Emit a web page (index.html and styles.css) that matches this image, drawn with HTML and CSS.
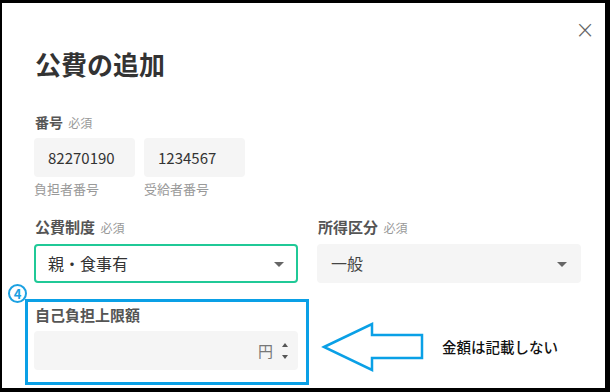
FILE: index.html
```html
<!DOCTYPE html>
<html lang="ja">
<head>
    <meta charset="UTF-8">
    <title>公費の追加</title>
    <link rel="stylesheet" href="styles.css">
</head>
<body>
    <div class="frame">
        <span class="close">&times;</span>
        <h2 class="title">公費の追加</h2>

        <div class="label">番号 <span class="req">必須</span></div>
        <div class="row">
            <div class="field small">
                <div class="input">82270190</div>
                <div class="hint">負担者番号</div>
            </div>
            <div class="field small">
                <div class="input">1234567</div>
                <div class="hint">受給者番号</div>
            </div>
        </div>

        <div class="row wide">
            <div class="field half">
                <div class="label">公費制度 <span class="req">必須</span></div>
                <div class="select active">親・食事有<span class="caret"></span></div>
            </div>
            <div class="field half">
                <div class="label">所得区分 <span class="req">必須</span></div>
                <div class="select">一般<span class="caret"></span></div>
            </div>
        </div>

        <div class="field half limit">
            <div class="label">自己負担上限額</div>
            <div class="input number">
                <span class="unit">円</span>
                <span class="spin"><i class="up"></i><i class="down"></i></span>
            </div>
        </div>

        <!-- 注記 -->
        <span class="num">4</span>
        <div class="mark"></div>
        <svg class="arrow" width="104" height="54" viewBox="0 0 104 54">
            <path d="M3 26 L51 3 L51 14 L101 14 L101 37 L51 37 L51 49 Z" fill="none" stroke="#0aa0e6" stroke-width="2.5"/>
        </svg>
        <span class="note">金額は記載しない</span>
    </div>
</body>
</html>
```

FILE: styles.css
```css
body {
    margin: 0;
    font-family: "Noto Sans CJK JP", "Noto Sans", sans-serif;
    background: #fff;
}

.frame {
    position: relative;
    width: 610px;
    height: 392px;
    box-sizing: border-box;
    border-style: solid;
    border-color: #000;
    border-width: 3px 5px 4px 2px;
    padding: 0 0 0 32px;
    overflow: hidden;
}

.close {
    position: absolute;
    top: 12px;
    right: 10px;
    font-size: 24px;
    line-height: 30px;
    color: #666;
    font-family: "DejaVu Sans", sans-serif;
    font-weight: 300;
}

.title {
    margin: 43px 0 0 1px;
    font-size: 26px;
    line-height: 36px;
    font-weight: bold;
    color: #333;
}

.label {
    font-size: 15px;
    font-weight: bold;
    color: #555;
    line-height: 20px;
    margin: 0 0 6px 1px;
}

.title + .label {
    margin-top: 30px;
    margin-bottom: 5px;
    font-size: 14px;
}

.req {
    font-size: 12px;
    font-weight: normal;
    color: #999;
    margin-left: 2px;
}

.row {
    display: flex;
    gap: 9px;
}

.row.wide {
    gap: 19px;
    margin-top: 19px;
}

.field.small {
    width: 101px;
}

.field.half {
    width: 264px;
}

.input {
    height: 39px;
    background: #f5f5f5;
    border-radius: 4px;
    font-size: 15px;
    line-height: 39px;
    padding: 0 14px;
    color: #333;
}

.hint {
    font-size: 13px;
    color: #999;
    line-height: 18px;
    margin-top: 3px;
}

.select {
    position: relative;
    height: 39px;
    box-sizing: border-box;
    background: #f5f5f5;
    border-radius: 4px;
    font-size: 16px;
    line-height: 39px;
    padding: 0 14px;
    color: #444;
}

.select.active {
    background: #fff;
    border: 2px solid #20c997;
    line-height: 35px;
    padding: 0 12px;
    color: #333;
}

.caret {
    position: absolute;
    right: 14px;
    top: 18px;
    border: 5px solid transparent;
    border-top-color: #666;
    border-bottom: 0;
}

.select.active .caret {
    right: 12px;
    top: 16px;
}

.limit {
    margin-top: 22px;
}

.limit .label {
    margin-bottom: 6px;
}

.number {
    display: flex;
    justify-content: flex-end;
    align-items: center;
    padding-right: 10px;
    color: #777;
}

.unit {
    font-size: 15px;
    margin-right: 9px;
}

.spin {
    display: flex;
    flex-direction: column;
    gap: 8px;
}

.spin i {
    border: 3px solid transparent;
}

.spin .up {
    border-bottom: 4px solid #555;
    border-top: 0;
}

.spin .down {
    border-top: 4px solid #555;
    border-bottom: 0;
}

.num {
    position: absolute;
    left: 6px;
    top: 281px;
    width: 19px;
    height: 19px;
    box-sizing: border-box;
    border: 2px solid #1ba1e2;
    border-radius: 50%;
    font-size: 13px;
    line-height: 15px;
    text-align: center;
    font-weight: bold;
    color: #1ba1e2;
}

.mark {
    position: absolute;
    left: 23px;
    top: 296px;
    width: 278px;
    height: 80px;
    border: 3px solid #0aa0e6;
}

.arrow {
    position: absolute;
    left: 319px;
    top: 318px;
}

.note {
    position: absolute;
    left: 440px;
    top: 333px;
    font-size: 14.5px;
    font-weight: 500;
    color: #111;
}
```
